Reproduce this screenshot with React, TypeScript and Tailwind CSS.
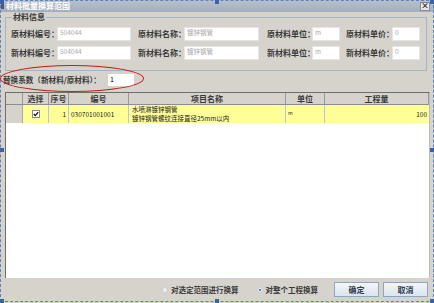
const font = { fontFamily: '"Noto Sans CJK SC", "Liberation Sans", sans-serif' }

type Field = { label: string; value: string; lw: string; iw: string; gap: string }

const rowA: Field[] = [
  { label: "原材料编号：", value: "504044", lw: "w-[46px]", iw: "w-[74px]", gap: "ml-0" },
  { label: "原材料名称：", value: "镀锌钢管", lw: "w-[46px]", iw: "w-[75px]", gap: "ml-[7px]" },
  { label: "原材料单位：", value: "m", lw: "w-[45px]", iw: "w-[28px]", gap: "ml-[8px]" },
  { label: "原材料单价：", value: "0", lw: "w-[46px]", iw: "w-[28px]", gap: "ml-[6px]" },
]

const rowB: Field[] = rowA.map((f) => ({ ...f, label: f.label.replace("原", "新") }))

function FieldRow({ fields }: { fields: Field[] }) {
  return (
    <div className="flex h-[14px] items-center">
      {fields.map((f) => (
        <div key={f.label} className={`flex items-center ${f.gap}`}>
          <span className={`${f.lw} whitespace-nowrap text-[8px] font-bold leading-none text-[#3a3a3a]`}>{f.label}</span>
          <div className={`${f.iw} h-[14px] border border-[#e4e4e4] bg-white pl-[2px] text-[6.5px] leading-[9px] text-[#a8a8a8]`}>
            {f.value}
          </div>
        </div>
      ))}
    </div>
  )
}

function Handle({ cls }: { cls: string }) {
  return <div className={`absolute h-[4px] w-[4px] bg-[#3b62a6] ${cls}`} />
}

export default function App() {
  const cols = "grid grid-cols-[17px_26px_20px_60px_157px_39px_104px]"
  return (
    <div className="relative h-[303px] w-[434px] overflow-hidden bg-[#d6d3cc]" style={font}>
      {/* title bar */}
      <div className="flex h-[12px] items-center bg-gradient-to-b from-[#b9c1cd] to-[#a2adbd] pl-[1px]">
        <div className="mr-[2px] h-[5px] w-[3px] bg-[#4a5a78]" />
        <span className="text-[8px] font-bold leading-none text-white">材料批量换算范围</span>
        <div className="ml-auto mr-[4px] flex h-[9px] w-[10px] items-center justify-center border border-[#8a8a8a] bg-[#e8e8e8] text-[8px] font-bold leading-none text-[#222]">
          ×
        </div>
      </div>

      {/* group box */}
      <fieldset className="ml-[5px] mr-[7px] border border-[#a3b5c9] pb-[10px] pl-[5px]">
        <legend className="ml-[1px] px-[1px] text-[8px] font-bold leading-[10px] text-[#3a3a3a]">材料信息</legend>
        <div className="mt-[5px] flex flex-col gap-[5px]">
          <FieldRow fields={rowA} />
          <FieldRow fields={rowB} />
        </div>
      </fieldset>

      {/* coefficient */}
      <div className="mt-[3px] flex h-[12px] items-center pl-[3px]">
        <span className="w-[105px] whitespace-nowrap text-[7.6px] font-bold leading-none text-[#3a3a3a]">替换系数（新材料/原材料）：</span>
        <div className="h-[12px] w-[26px] bg-white pl-[2px] text-[7px] leading-[11px] text-black">1</div>
      </div>

      {/* grid */}
      <div className="ml-[5px] mt-[6px] h-[186px] w-[425px] border-l border-t border-l-[#6e6e6e] border-t-[#6e6e6e] border-r border-r-[#bdbdbd] bg-white">
        <div className={`${cols} h-[12px] bg-[#d6d3cc] text-[8px] font-bold leading-none text-[#3a3a3a]`}>
          {["", "选择", "序号", "编号", "项目名称", "单位", "工程量"].map((h, i) => (
            <div key={i} className="flex items-center justify-center border-b border-r border-b-[#8d8d8d] border-r-[#9a9a9a]">
              {h}
            </div>
          ))}
        </div>
        <div className={`${cols} h-[18px] text-[6.5px] leading-[9px] text-[#222]`}>
          <div className="border-r border-[#a9a9a9] bg-[#d6d3cc]" />
          <div className="flex items-center justify-center border-r border-[#b4c8d8] bg-[#ffff99]">
            <div className="flex h-[8px] w-[8px] items-center justify-center border border-[#8a8a8a] bg-white">
              <svg width="6" height="6" viewBox="0 0 6 6">
                <path d="M0.8 3 L2.3 4.6 L5.2 1.2" fill="none" stroke="#111" strokeWidth="1.3" />
              </svg>
            </div>
          </div>
          <div className="flex items-center justify-end border-r border-[#b4c8d8] bg-[#ffff99] pr-[2px]">1</div>
          <div className="flex items-center border-r border-[#b4c8d8] bg-[#ffff99] pl-[2px]">030701001001</div>
          <div className="flex flex-col justify-center border-r border-[#b4c8d8] bg-[#ffff99] pl-[3px]">
            <span className="whitespace-nowrap">水喷淋镀锌钢管</span>
            <span className="whitespace-nowrap">镀锌钢管螺纹连接直径25mm以内</span>
          </div>
          <div className="border-r border-[#b4c8d8] bg-[#ffff99] pl-[2px] pt-[3px] text-[5px]">m</div>
          <div className="flex items-center justify-end bg-[#ffff99] pr-[2px]">100</div>
        </div>
      </div>

      {/* footer */}
      <div className="flex h-[23px] items-center whitespace-nowrap pl-[162px] text-[7.5px] font-bold leading-none text-[#3a3a3a]">
        <div className="h-[6px] w-[6px] shrink-0 rounded-full border border-[#c8ccd2] bg-[#eef0f3]" />
        <span className="ml-[3px]">对选定范围进行换算</span>
        <div className="ml-[18px] flex h-[6px] w-[6px] shrink-0 items-center justify-center rounded-full border border-[#c8ccd2] bg-[#eef0f3]">
          <div className="h-[2px] w-[2px] rounded-full bg-[#3a5a8a]" />
        </div>
        <span className="ml-[3px]">对整个工程换算</span>
        <button type="button" className="ml-auto h-[15px] w-[45px] shrink-0 border border-[#8fa6c2] bg-gradient-to-b from-[#f2f5f9] to-[#dde4ee] text-[8px] font-bold text-[#2c3a52]">
          确定
        </button>
        <button type="button" className="ml-[4px] mr-[6px] h-[15px] w-[45px] shrink-0 border border-[#8fa6c2] bg-gradient-to-b from-[#f2f5f9] to-[#dde4ee] text-[8px] font-bold text-[#2c3a52]">
          取消
        </button>
      </div>

      {/* red annotation ellipse */}
      <div className="pointer-events-none absolute left-0 top-[65px] h-[27px] w-[144px] rounded-[50%] border-[1.5px] border-[#cc1a1a]" />

      {/* selection outline */}
      <div className="pointer-events-none absolute inset-x-0 bottom-[1px] top-0 border border-dashed border-[#5c82c4]" />
      <Handle cls="left-0 top-0" />
      <Handle cls="left-[215px] top-0" />
      <Handle cls="right-0 top-0" />
      <Handle cls="left-0 top-[148px]" />
      <Handle cls="right-0 top-[148px]" />
      <Handle cls="bottom-0 left-0" />
      <Handle cls="bottom-0 left-[215px]" />
      <Handle cls="bottom-0 right-0" />
    </div>
  )
}
